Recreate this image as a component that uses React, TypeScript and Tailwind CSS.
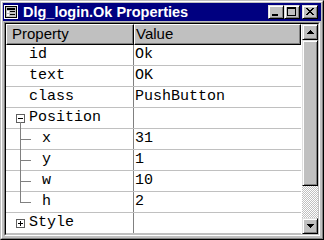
import React from 'react'

type Row = {
  name: string
  value: string
  level: 0 | 1
  expander?: 'minus' | 'plus'
  last?: boolean
  parent?: boolean
}

const rows: Row[] = [
  { name: 'id', value: 'Ok', level: 0 },
  { name: 'text', value: 'OK', level: 0 },
  { name: 'class', value: 'PushButton', level: 0 },
  { name: 'Position', value: '', level: 0, expander: 'minus', parent: true },
  { name: 'x', value: '31', level: 1 },
  { name: 'y', value: '1', level: 1 },
  { name: 'w', value: '10', level: 1 },
  { name: 'h', value: '2', level: 1, last: true },
  { name: 'Style', value: '', level: 0, expander: 'plus' },
]

const raised =
  'border border-t-[#dfdfdf] border-l-[#dfdfdf] border-r-black border-b-black bg-[#c0c0c0] shadow-[inset_1px_1px_#fff,inset_-1px_-1px_#808080]'

function TitleIcon() {
  return (
    <svg width="14" height="14" viewBox="0 0 14 14" shapeRendering="crispEdges">
      <rect x="0" y="0" width="14" height="14" fill="#fff" />
      <rect x="1" y="1" width="12" height="12" fill="#c0c0c0" />
      <rect x="1" y="1" width="12" height="1" fill="#000" />
      <rect x="1" y="1" width="1" height="12" fill="#000" />
      <rect x="12" y="1" width="1" height="12" fill="#000" />
      <rect x="1" y="12" width="12" height="1" fill="#000" />
      <rect x="3" y="3" width="8" height="2" fill="#000" />
      <rect x="3" y="6" width="2" height="2" fill="#fff" />
      <rect x="6" y="6" width="5" height="1" fill="#000" />
      <rect x="3" y="9" width="2" height="2" fill="#fff" />
      <rect x="6" y="9" width="5" height="1" fill="#000" />
    </svg>
  )
}

function CaptionButton({ kind }: { kind: 'min' | 'max' | 'close' }) {
  return (
    <div className={`${raised} w-[16px] h-[14px] flex items-center justify-center`}>
      <svg width="14" height="12" viewBox="0 0 14 12" shapeRendering="crispEdges">
        {kind === 'min' && <rect x="3" y="8" width="6" height="2" fill="#000" />}
        {kind === 'max' && (
          <>
            <rect x="2" y="1" width="9" height="2" fill="#000" />
            <rect x="2" y="1" width="1" height="9" fill="#000" />
            <rect x="10" y="1" width="1" height="9" fill="#000" />
            <rect x="2" y="9" width="9" height="1" fill="#000" />
          </>
        )}
        {kind === 'close' && (
          <path
            d="M3 2h2v1h1v1h2V3h1V2h2v1h-1v1H9v1H8v1h1v1h1v1h1v1H9V8H8V7H6v1H5v1H3V8h1V7h1V6h1V5H5V4H4V3H3z"
            fill="#000"
          />
        )}
      </svg>
    </div>
  )
}

function Expander({ kind }: { kind: 'minus' | 'plus' }) {
  return (
    <svg width="9" height="9" viewBox="0 0 9 9" shapeRendering="crispEdges" className="shrink-0">
      <rect x="0.5" y="0.5" width="8" height="8" fill="#fff" stroke="#606060" />
      <rect x="2" y="4" width="5" height="1" fill="#000" />
      {kind === 'plus' && <rect x="4" y="2" width="1" height="5" fill="#000" />}
    </svg>
  )
}

function Arrow({ dir }: { dir: 'up' | 'down' }) {
  return (
    <svg width="7" height="4" viewBox="0 0 7 4" shapeRendering="crispEdges">
      {dir === 'up' ? (
        <path d="M3 0h1v1h1v1h1v1h1v1H0V3h1V2h1V1h1z" fill="#000" />
      ) : (
        <path d="M0 0h7v1H6v1H5v1H4v1H3V3H2V2H1V1H0z" fill="#000" />
      )}
    </svg>
  )
}

export default function App() {
  return (
    <div className="w-[324px] h-[240px] border border-t-[#c0c0c0] border-l-[#c0c0c0] border-r-black border-b-black">
      <div className="h-full flex flex-col p-[1px] bg-[#c0c0c0] border border-t-white border-l-white border-r-[#808080] border-b-[#808080]">
        {/* Title bar */}
        <div className="h-[18px] shrink-0 flex items-center bg-[#000080] pl-[1px] pr-[3px]">
          <TitleIcon />
          <span className="ml-[5px] text-white font-bold text-[14.5px] leading-[16px] font-['Liberation_Sans',Arial,sans-serif] whitespace-nowrap">
            Dlg_login.Ok Properties
          </span>
          <div className="ml-auto flex items-center">
            <CaptionButton kind="min" />
            <CaptionButton kind="max" />
            <div className="ml-[2px]">
              <CaptionButton kind="close" />
            </div>
          </div>
        </div>

        {/* Property list */}
        <div className="mt-[1px] mb-[1px] mx-[1px] flex-1 border border-t-[#808080] border-l-[#808080] border-r-white border-b-white">
          <div className="h-full flex border border-t-black border-l-black border-r-[#c0c0c0] border-b-[#c0c0c0] bg-white">
            <div className="w-[296px] flex flex-col">
              <div className="h-[21px] flex shrink-0 font-['Liberation_Sans',Arial,sans-serif] text-[15px] text-black">
                <div className="w-[128px] flex items-center pl-[5px] bg-[#c0c0c0] border border-t-white border-l-white border-r-black border-b-black shadow-[inset_-1px_-1px_#808080]">
                  Property
                </div>
                <div className="w-[167px] flex items-center pl-[1px] bg-[#c0c0c0] border border-t-white border-l-white border-r-black border-b-black shadow-[inset_-1px_-1px_#808080]">
                  Value
                </div>
              </div>
              {rows.map((r) => (
                <div
                  key={r.name}
                  className="w-[295px] h-[21px] flex shrink-0 border-b border-[#c0c0c0] font-['Liberation_Mono','Courier_New',monospace] text-[15px] leading-[20px] text-black"
                >
                  <div
                    className={`relative w-[128px] flex items-center border-r border-[#808080] ${
                      r.expander ? 'pl-[10px]' : r.level === 1 ? 'pl-[36px]' : 'pl-[23px]'
                    }`}
                  >
                    {r.level === 1 && (
                      <>
                        <span
                          className={`absolute left-[14px] top-0 w-px bg-[#808080] ${
                            r.last ? 'h-[11px]' : 'h-[21px]'
                          }`}
                        />
                        <span className="absolute left-[14px] top-[10px] w-[11px] h-px bg-[#808080]" />
                      </>
                    )}
                    {r.parent && (
                      <span className="absolute left-[14px] top-[14px] h-[7px] w-px bg-[#808080]" />
                    )}
                    {r.expander && <Expander kind={r.expander} />}
                    <span className={r.expander ? 'ml-[4px]' : ''}>{r.name}</span>
                  </div>
                  <div className="flex-1 flex items-center pl-[1px]">{r.value}</div>
                </div>
              ))}
            </div>

            {/* Scrollbar */}
            <div className="w-[16px] flex flex-col">
              <div className={`${raised} h-[16px] flex items-center justify-center`}>
                <Arrow dir="up" />
              </div>
              <div className={`${raised} h-[146px]`} />
              <div className="flex-1 bg-[repeating-conic-gradient(#c0c0c0_0_25%,#fff_0_50%)] bg-[length:2px_2px]" />
              <div className={`${raised} h-[16px] flex items-center justify-center`}>
                <Arrow dir="down" />
              </div>
            </div>
          </div>
        </div>
      </div>
    </div>
  )
}
